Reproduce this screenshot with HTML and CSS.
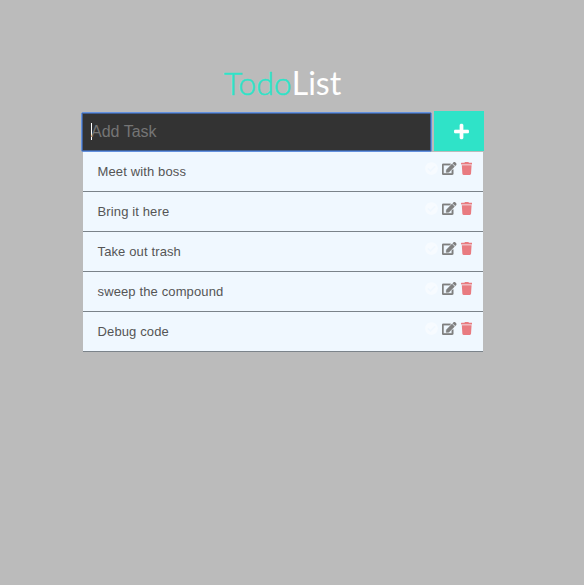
FILE: index.html
```html
<!DOCTYPE html>
<html lang="en">
<head>
<meta charset="utf-8">
<title>TodoList</title>
<link rel="stylesheet" href="styles.css">
</head>
<body>
<svg class="sprite" aria-hidden="true">
  <symbol id="check" viewBox="0 0 512 512"><path d="M504 256c0 136.967-111.033 248-248 248S8 392.967 8 256 119.033 8 256 8s248 111.033 248 248zM227.314 387.314l184-184c6.248-6.248 6.248-16.379 0-22.627l-22.627-22.627c-6.248-6.249-16.379-6.249-22.628 0L216 308.118l-70.059-70.059c-6.248-6.248-16.379-6.248-22.628 0l-22.627 22.627c-6.248 6.248-6.248 16.379 0 22.627l104 104c6.249 6.249 16.379 6.249 22.628.001z"/></symbol>
  <symbol id="edit" viewBox="0 0 576 512"><path d="M402.600 83.200l90.200 90.200c3.800 3.800 3.800 10 0 13.800L274.400 405.600l-92.800 10.300c-12.400 1.400-22.900-9.100-21.500-21.500l10.300-92.800L388.800 83.200c3.800-3.800 10-3.800 13.800 0zm162-22.900l-48.800-48.800c-15.200-15.200-39.900-15.200-55.200 0l-35.400 35.400c-3.800 3.800-3.800 10 0 13.800l90.200 90.200c3.800 3.800 10 3.800 13.800 0l35.400-35.400c15.200-15.300 15.200-40 0-55.200zM384 346.200V448H64V128h229.800c3.200 0 6.200-1.300 8.500-3.500l40-40c7.600-7.600 2.200-20.500-8.500-20.500H48C21.500 64 0 85.500 0 112v352c0 26.500 21.500 48 48 48h352c26.500 0 48-21.500 48-48V306.200c0-10.700-12.900-16-20.500-8.500l-40 40c-2.200 2.300-3.500 5.300-3.500 8.500z"/></symbol>
  <symbol id="trash" viewBox="0 0 448 512"><path d="M432 32H312l-9.400-18.700A24 24 0 0 0 281.100 0H166.800a23.720 23.720 0 0 0-21.400 13.300L136 32H16A16 16 0 0 0 0 48v32a16 16 0 0 0 16 16h416a16 16 0 0 0 16-16V48a16 16 0 0 0-16-16zM53.200 467a48 48 0 0 0 47.900 45h245.800a48 48 0 0 0 47.900-45L416 128H32z"/></symbol>
  <symbol id="plus" viewBox="0 0 448 512"><path d="M416 208H272V64c0-17.670-14.330-32-32-32h-32c-17.670 0-32 14.330-32 32v144H32c-17.670 0-32 14.330-32 32v32c0 17.670 14.330 32 32 32h144v144c0 17.670 14.330 32 32 32h32c17.670 0 32-14.330 32-32V304h144c17.670 0 32-14.330 32-32v-32c0-17.670-14.330-32-32-32z"/></symbol>
</svg>
<main class="app">
  <h1 class="title"><span class="accent">Todo</span>List</h1>
  <div class="form">
    <div class="field"><span class="caret"></span><span>Add Task</span></div>
    <button class="add" aria-label="Add"><svg class="plus"><use href="#plus"/></svg></button>
  </div>
  <ul class="list">
    <li class="item"><span>Meet with boss</span><span class="actions"><svg class="check"><use href="#check"/></svg><svg class="edit"><use href="#edit"/></svg><svg class="trash"><use href="#trash"/></svg></span></li>
    <li class="item"><span>Bring it here</span><span class="actions"><svg class="check"><use href="#check"/></svg><svg class="edit"><use href="#edit"/></svg><svg class="trash"><use href="#trash"/></svg></span></li>
    <li class="item"><span>Take out trash</span><span class="actions"><svg class="check"><use href="#check"/></svg><svg class="edit"><use href="#edit"/></svg><svg class="trash"><use href="#trash"/></svg></span></li>
    <li class="item"><span>sweep the compound</span><span class="actions"><svg class="check"><use href="#check"/></svg><svg class="edit"><use href="#edit"/></svg><svg class="trash"><use href="#trash"/></svg></span></li>
    <li class="item"><span>Debug code</span><span class="actions"><svg class="check"><use href="#check"/></svg><svg class="edit"><use href="#edit"/></svg><svg class="trash"><use href="#trash"/></svg></span></li>
  </ul>
</main>
</body>
</html>
```
FILE: styles.css
```css
* { box-sizing: border-box; }
body { margin: 0; min-height: 100vh; background: #bbb; font-family: "Liberation Sans", Arial, sans-serif; }
.sprite { display: none; }
svg { display: block; fill: currentColor; }
.app { width: 404px; margin-left: 81px; padding-top: 61px; }
.title { margin: 0; height: 50px; padding-right: 1px; font: 400 32px/43px Lato, sans-serif; color: #fff; text-align: center; }
.accent { color: #2fe3c8; font-weight: 300; -webkit-text-stroke: 0.5px #2fe3c8; }
.form { display: flex; justify-content: space-between; height: 41px; padding-right: 1px; }
.field { display: flex; align-items: center; width: 351px; height: 40px; margin-top: 1px; padding: 0 0 1px 9px; border: 1px solid #6391df; border-radius: 2px; box-shadow: inset 0 0 0 1px #3f5e94; background: #333; color: #757575; font-size: 16px; }
.caret { width: 1px; height: 17px; margin-right: -1px; background: #fff; }
.add { display: flex; align-items: center; justify-content: center; width: 50px; height: 40px; padding: 0 0 0 4px; border: 0; background: #2fe3c8; color: #fff; }
.plus { width: 15px; height: 17px; stroke: currentColor; stroke-width: 16px; }
.list { width: 400px; margin: 0 0 0 2px; padding: 0; list-style: none; }
.item { display: flex; justify-content: space-between; height: 40px; padding: 0 11px 0 14.5px; border-bottom: 1px solid #7b838a; background: #f0f8ff; color: #555; font-size: 13px; line-height: 39px; letter-spacing: 0.13px; }
.actions { display: flex; gap: 4px; padding-top: 10px; }
.check { width: 13px; height: 13px; color: #f7fbff; }
.edit { width: 14.6px; height: 13px; color: #808080; stroke: currentColor; stroke-width: 12px; }
.trash { width: 11.4px; height: 13px; color: #e97b80; }
```
